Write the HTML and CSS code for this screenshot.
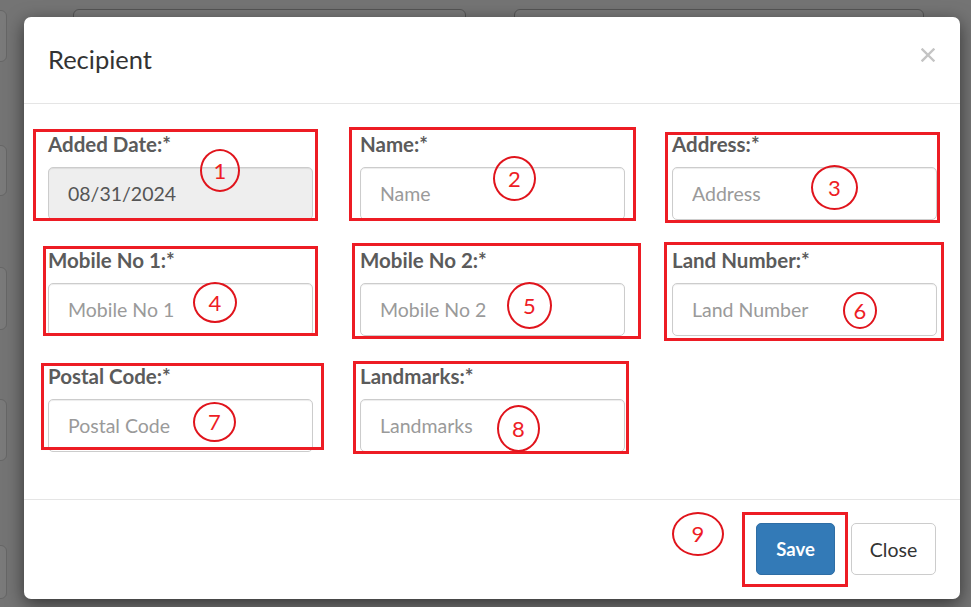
FILE: index.html
```html
<!DOCTYPE html>
<html lang="en">
<head>
<meta charset="utf-8">
<title>Recipient</title>
<link rel="stylesheet" href="styles.css">
</head>
<body>
<div class="page">
  <div class="side">
    <div class="side-box s1"></div>
    <div class="side-box s2"></div>
    <div class="side-box s3"></div>
    <div class="side-box s4"></div>
    <div class="side-box s5"></div>
  </div>
  <div class="main">
    <div class="top-box b1"></div>
    <div class="top-box b2"></div>
  </div>
</div>

<div class="modal">
  <div class="modal-header">
    <h4 class="modal-title">Recipient</h4>
    <svg class="close" width="14" height="14" viewBox="0 0 14 14"><path d="M1.5 1.5 L12.5 12.5 M12.5 1.5 L1.5 12.5" stroke="#c4c4c4" stroke-width="2.4" stroke-linecap="square"/></svg>
  </div>
  <div class="modal-body">
    <div class="field"><label class="lbl">Added Date:*</label><input class="ctl" type="text" value="08/31/2024" disabled></div>
    <div class="field"><label class="lbl">Name:*</label><input class="ctl" type="text" placeholder="Name"></div>
    <div class="field"><label class="lbl">Address:*</label><input class="ctl" type="text" placeholder="Address"></div>
    <div class="field"><label class="lbl">Mobile No 1:*</label><input class="ctl" type="text" placeholder="Mobile No 1"></div>
    <div class="field"><label class="lbl">Mobile No 2:*</label><input class="ctl" type="text" placeholder="Mobile No 2"></div>
    <div class="field"><label class="lbl">Land Number:*</label><input class="ctl" type="text" placeholder="Land Number"></div>
    <div class="field"><label class="lbl">Postal Code:*</label><input class="ctl" type="text" placeholder="Postal Code"></div>
    <div class="field"><label class="lbl">Landmarks:*</label><input class="ctl" type="text" placeholder="Landmarks"></div>
  </div>
  <div class="modal-footer">
    <button class="btn btn-primary">Save</button>
    <button class="btn btn-default">Close</button>
  </div>

  <div class="mark box r1"></div>
  <div class="mark box r2"></div>
  <div class="mark box r3"></div>
  <div class="mark box r4"></div>
  <div class="mark box r5"></div>
  <div class="mark box r6"></div>
  <div class="mark box r7"></div>
  <div class="mark box r8"></div>
  <div class="mark box r9"></div>

  <div class="mark num c1">1</div>
  <div class="mark num c2">2</div>
  <div class="mark num c3">3</div>
  <div class="mark num c4">4</div>
  <div class="mark num c5">5</div>
  <div class="mark num c6">6</div>
  <div class="mark num c7">7</div>
  <div class="mark num c8">8</div>
  <div class="mark num c9">9</div>
</div>
</body>
</html>
```

FILE: styles.css
```css
* { box-sizing: border-box; }
html, body { margin: 0; padding: 0; }
body {
  width: 971px;
  height: 607px;
  overflow: hidden;
  background: #747474;
  font-family: Lato, "Liberation Sans", sans-serif;
  position: relative;
}

/* dimmed page behind the modal */
.page { display: flex; height: 607px; }
.side {
  width: 7px;
  overflow: hidden;
  display: flex;
  flex-direction: column;
  padding-top: 10px;
}
.side-box {
  width: 40px;
  margin-left: -33px;
  border: 1px solid #666;
  border-radius: 6px;
  background: #7a7a7a;
  flex: none;
}
.s1 { height: 52px; }
.s2 { height: 51px; margin-top: 83px; }
.s3 { height: 63px; margin-top: 71px; }
.s4 { height: 62px; margin-top: 69px; }
.s5 { height: 54px; margin-top: 84px; }

.main {
  display: flex;
  gap: 48px;
  padding: 9px 0 0 66px;
  align-items: flex-start;
}
.top-box {
  height: 80px;
  border: 1px solid #555;
  border-radius: 6px;
  background: #787878;
}
.b1 { width: 393px; }
.b2 { width: 410px; }

/* modal */
.modal {
  position: absolute;
  left: 24px;
  top: 17px;
  width: 936px;
  height: 582px;
  background: #fff;
  border-radius: 7px;
  box-shadow: 0 5px 18px rgba(0,0,0,.55);
  display: flex;
  flex-direction: column;
}
.modal-header {
  display: flex;
  justify-content: space-between;
  align-items: flex-start;
  padding: 25px 25px 27px 24px;
  border-bottom: 1px solid #e5e5e5;
}
.modal-title {
  margin: 0;
  font-size: 25.5px;
  line-height: 34px;
  font-weight: 400;
  color: #333;
}
.close { margin-top: 6px; display: block; }

.modal-body {
  display: grid;
  grid-template-columns: repeat(3, 265px);
  column-gap: 47px;
  row-gap: 28px;
  padding: 28px 23px 47px 24px;
  align-content: start;
}
.field { display: flex; flex-direction: column; gap: 10px; }
.lbl {
  font-size: 20.5px;
  line-height: 25px;
  font-weight: 700;
  color: #5b5b5b;
  white-space: nowrap;
}
.ctl {
  height: 53px;
  width: 100%;
  border: 1px solid #ccc;
  border-radius: 5px;
  padding: 0 19px;
  font-family: Lato, "Liberation Sans", sans-serif;
  font-size: 19.5px;
  color: #555;
  background: #fff;
  box-shadow: inset 0 1px 1px rgba(0,0,0,.075);
  outline: none;
}
.ctl::placeholder { color: #9a9a9a; }
.ctl:disabled { background: #eee; color: #555; opacity: 1; }

.modal-footer {
  display: flex;
  justify-content: flex-end;
  gap: 16px;
  padding: 23px 24px 24px;
  border-top: 1px solid #e5e5e5;
}
.btn {
  height: 52px;
  border-radius: 5px;
  font-family: Lato, "Liberation Sans", sans-serif;
  font-size: 18.5px;
  padding: 0;
}
.btn-primary {
  width: 79px;
  background: #337ab7;
  border: 1px solid #2e6da4;
  color: #fff;
  font-weight: 700;
}
.btn-default {
  width: 85px;
  background: #fff;
  border: 1px solid #ccc;
  color: #333;
  font-size: 19.5px;
}

/* annotations overlay */
.mark { position: absolute; }
.box { border: 3px solid #ed1c24; }
.r1 { left: 9px;   top: 112px; width: 285px; height: 92px; }
.r2 { left: 325px; top: 110px; width: 287px; height: 94px; }
.r3 { left: 641px; top: 115px; width: 275px; height: 91px; }
.r4 { left: 19px;  top: 229px; width: 275px; height: 90px; }
.r5 { left: 328px; top: 226px; width: 289px; height: 96px; }
.r6 { left: 640px; top: 225px; width: 280px; height: 99px; }
.r7 { left: 17px;  top: 346px; width: 283px; height: 87px; }
.r8 { left: 329px; top: 344px; width: 276px; height: 93px; }
.r9 { left: 718px; top: 495px; width: 106px; height: 75px; }

.num {
  border: 2.5px solid #e0141c;
  border-radius: 50%;
  color: #ee1c25;
  font-size: 22px;
  display: flex;
  align-items: center;
  justify-content: center;
  line-height: 1;
}
.c1 { left: 176px; top: 132px; width: 40px; height: 43px; }
.c2 { left: 469px; top: 139px; width: 43px; height: 45px; }
.c3 { left: 787px; top: 148px; width: 47px; height: 45px; }
.c4 { left: 169px; top: 265px; width: 44px; height: 41px; }
.c5 { left: 483px; top: 265px; width: 45px; height: 47px; }
.c6 { left: 819px; top: 275px; width: 34px; height: 37px; }
.c7 { left: 169px; top: 385px; width: 43px; height: 40px; }
.c8 { left: 473px; top: 388px; width: 43px; height: 47px; }
.c9 { left: 648px; top: 495px; width: 52px; height: 44px; }
```
